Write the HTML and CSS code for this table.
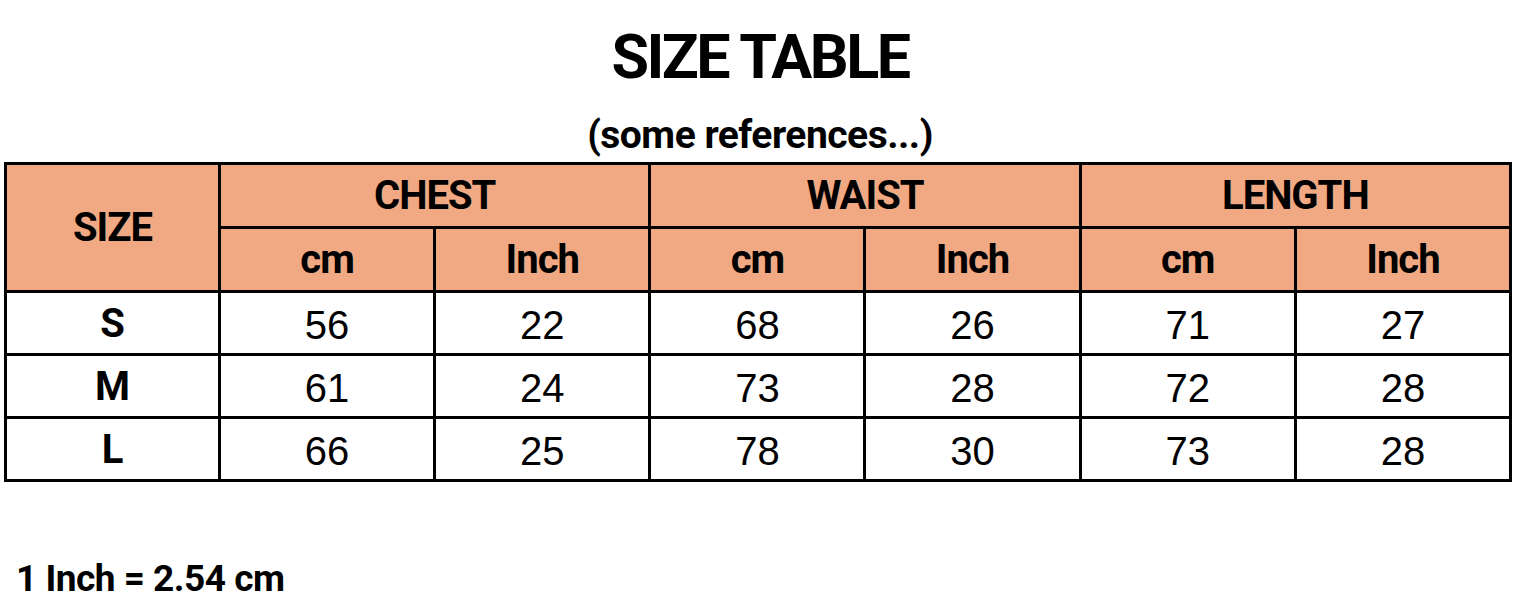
FILE: index.html
```html
<!DOCTYPE html>
<html>
<head>
<meta charset="utf-8">
<link rel="stylesheet" href="styles.css">
</head>
<body>
<h1 class="title">SIZE TABLE</h1>
<p class="subtitle">(some references...)</p>
<table class="size-table">
  <colgroup>
    <col class="c-size"><col><col><col><col><col><col>
  </colgroup>
  <thead>
    <tr>
      <th rowspan="2" class="h-size">SIZE</th>
      <th colspan="2">CHEST</th>
      <th colspan="2">WAIST</th>
      <th colspan="2">LENGTH</th>
    </tr>
    <tr>
      <th>cm</th><th>Inch</th>
      <th>cm</th><th>Inch</th>
      <th>cm</th><th>Inch</th>
    </tr>
  </thead>
  <tbody>
    <tr><th class="row-label">S</th><td>56</td><td>22</td><td>68</td><td>26</td><td>71</td><td>27</td></tr>
    <tr><th class="row-label">M</th><td>61</td><td>24</td><td>73</td><td>28</td><td>72</td><td>28</td></tr>
    <tr><th class="row-label">L</th><td>66</td><td>25</td><td>78</td><td>30</td><td>73</td><td>28</td></tr>
  </tbody>
</table>
<p class="note">1 Inch = 2.54 cm</p>
</body>
</html>
```

FILE: styles.css
```css
html, body {
  margin: 0;
  padding: 0;
  background: #ffffff;
  color: #000000;
}

body {
  font-family: Roboto, "Liberation Sans", sans-serif;
  width: 1520px;
}

.title {
  margin: 22px 0 0 0;
  font-size: 61px;
  line-height: 70px;
  font-weight: 700;
  text-align: center;
  letter-spacing: -2.5px;
}

.subtitle {
  margin: 21px 0 0 0;
  font-size: 39px;
  line-height: 44px;
  font-weight: 700;
  text-align: center;
  letter-spacing: -0.5px;
}

.size-table {
  margin: 5px 0 0 4px;
  border-collapse: collapse;
  width: 1508px;
  table-layout: fixed;
}

.size-table col.c-size {
  width: 214px;
}

.size-table th,
.size-table td {
  border: 3px solid #000;
  height: 61px;
  padding: 0;
  text-align: center;
  vertical-align: middle;
}

.size-table thead th {
  background: #f0a983;
  font-family: Roboto, sans-serif;
  font-weight: 700;
  font-size: 40px;
  letter-spacing: -1px;
}

.size-table .row-label {
  font-family: Roboto, sans-serif;
  font-weight: 700;
  font-size: 40px;
  height: 60px;
}

.size-table td {
  font-family: "Liberation Sans", Arial, sans-serif;
  font-weight: 400;
  font-size: 40px;
  padding-top: 4px;
  height: 56px;
}

.note {
  margin: 75px 0 0 16px;
  font-size: 37px;
  line-height: 44px;
  font-weight: 700;
  letter-spacing: -0.5px;
}
```
